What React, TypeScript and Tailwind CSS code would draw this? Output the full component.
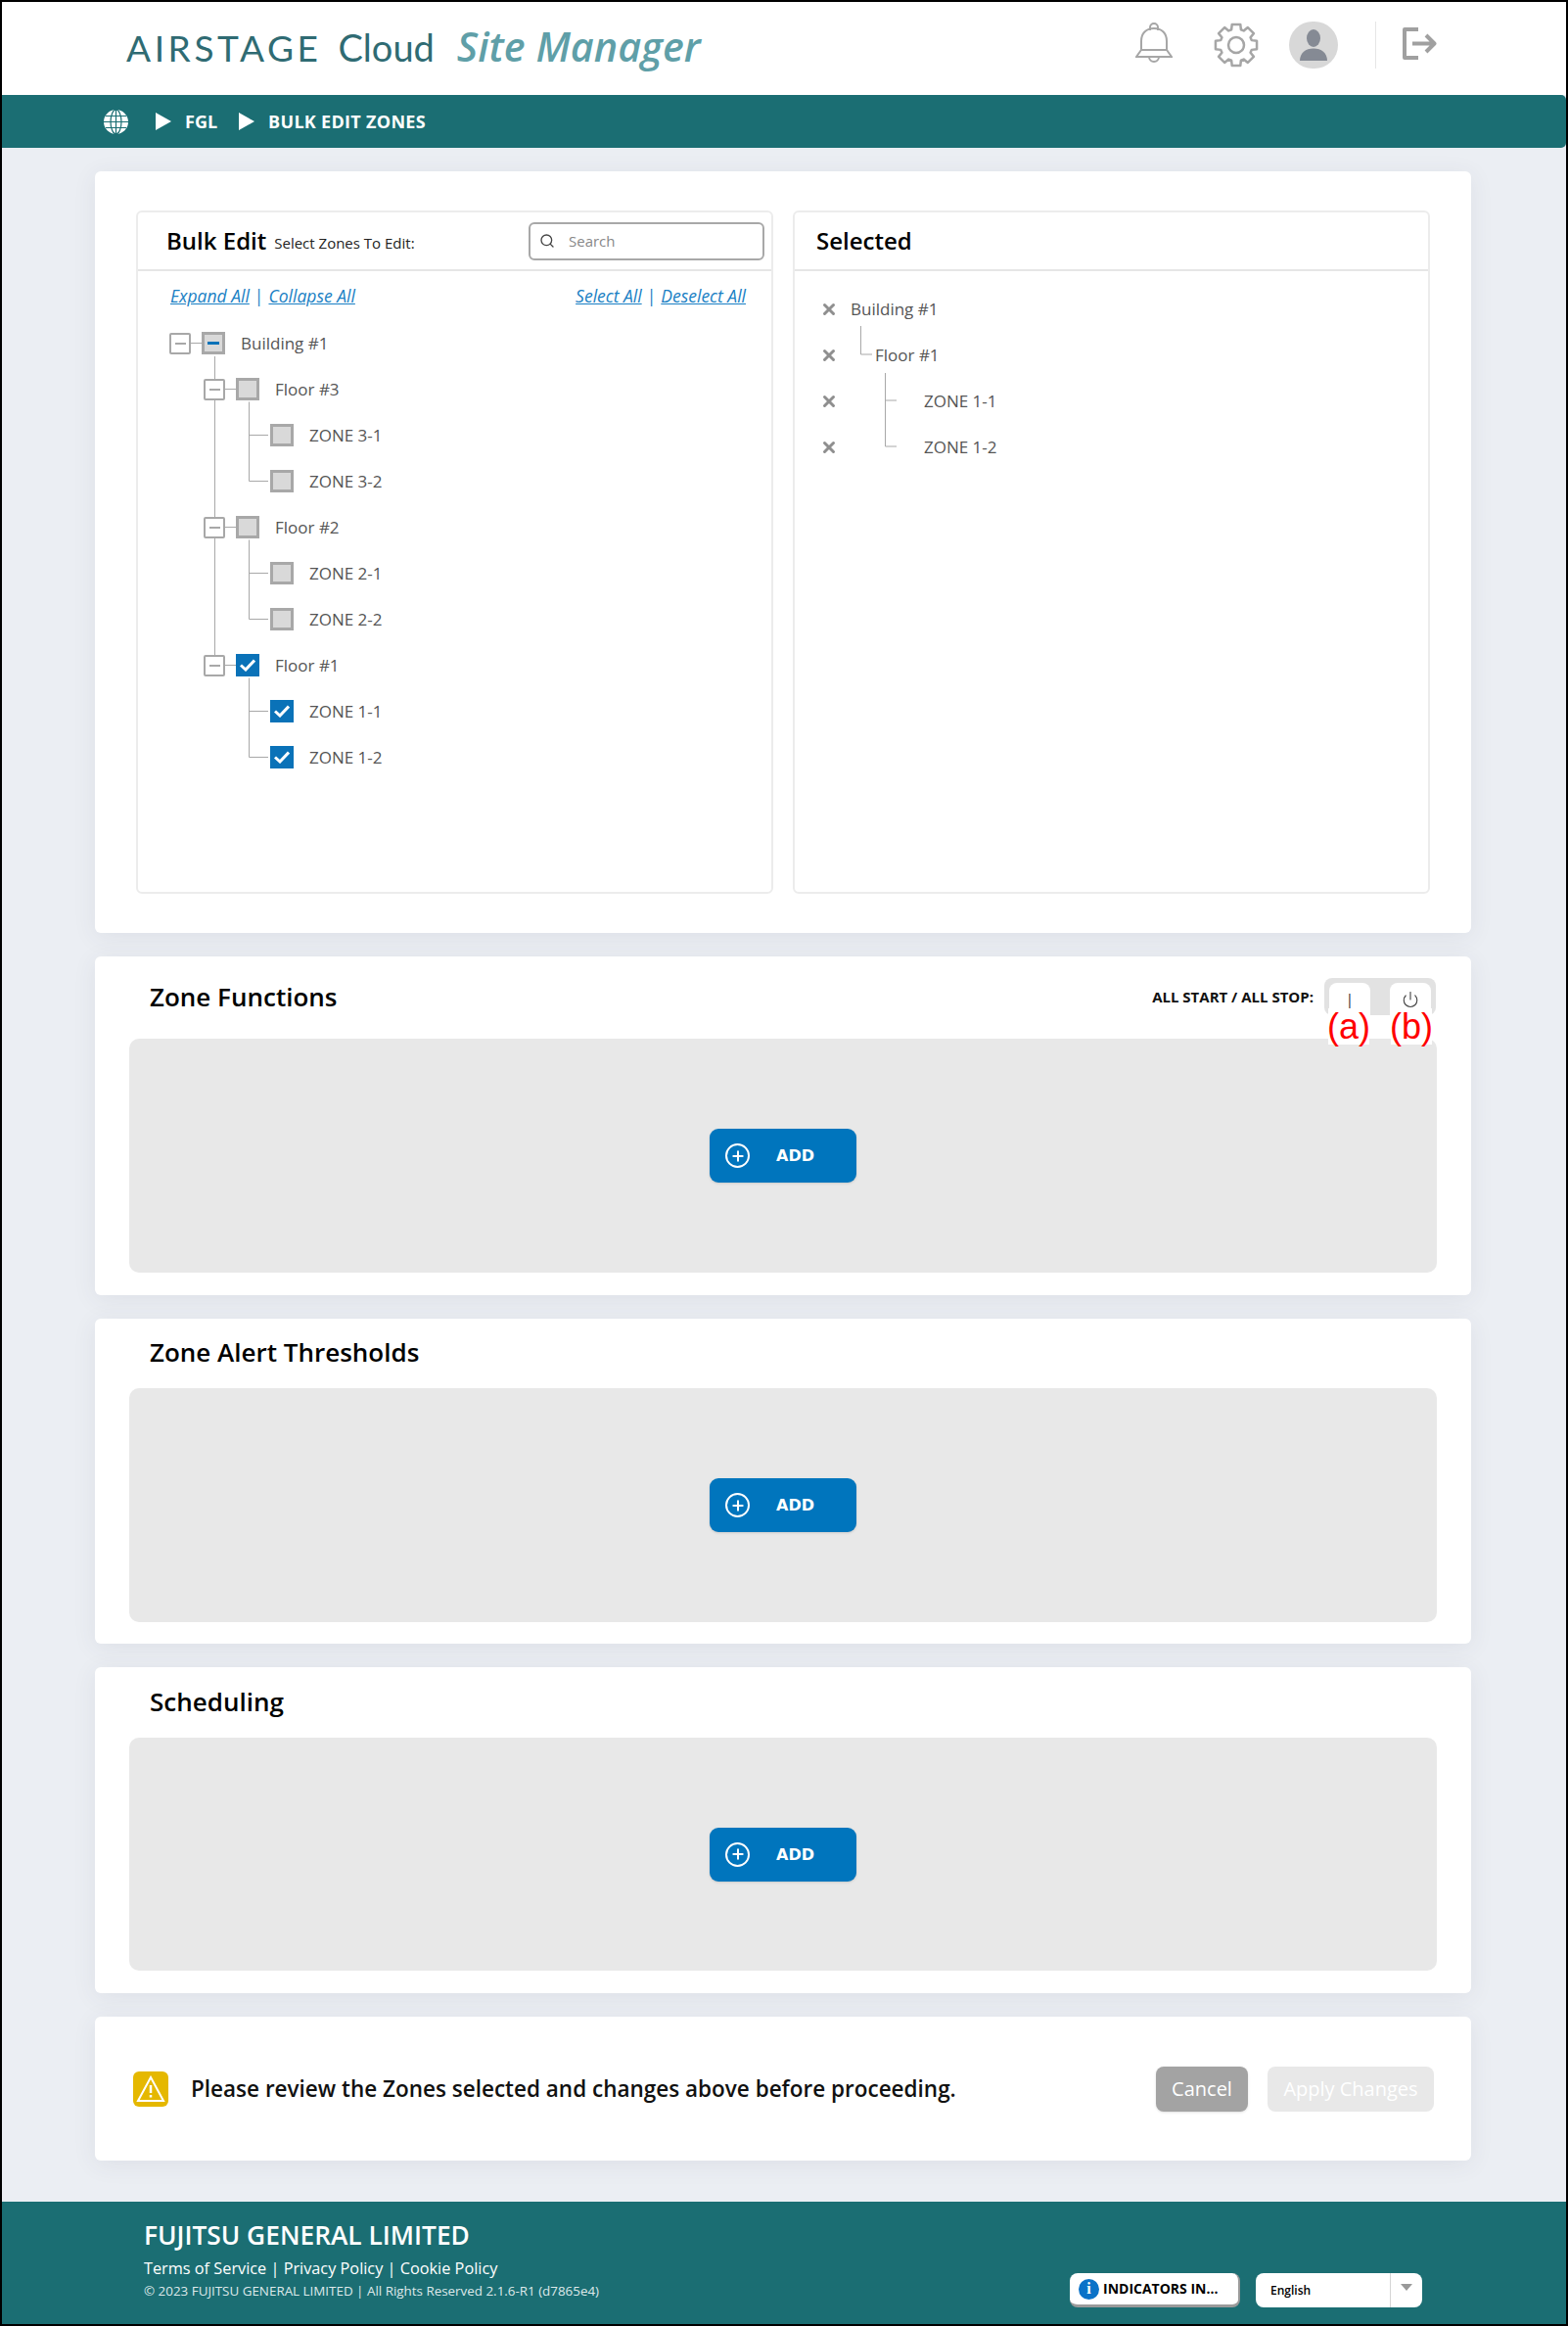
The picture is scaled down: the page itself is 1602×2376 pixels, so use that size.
import { Plus, Power, Search, X } from "lucide-react";

type TreeRow = { label: string; level: number; state: "none" | "some" | "all" };

const treeRows: TreeRow[] = [
  { label: "Building #1", level: 0, state: "some" },
  { label: "Floor #3", level: 1, state: "none" },
  { label: "ZONE 3-1", level: 2, state: "none" },
  { label: "ZONE 3-2", level: 2, state: "none" },
  { label: "Floor #2", level: 1, state: "none" },
  { label: "ZONE 2-1", level: 2, state: "none" },
  { label: "ZONE 2-2", level: 2, state: "none" },
  { label: "Floor #1", level: 1, state: "all" },
  { label: "ZONE 1-1", level: 2, state: "all" },
  { label: "ZONE 1-2", level: 2, state: "all" },
];

// outline of an 8 tooth cog, square teeth like the reference
function cogPath(cx: number, cy: number, outer: number, inner: number) {
  const pts: string[] = [];
  for (let i = 0; i < 8; i++) {
    const a = (i * Math.PI) / 4;
    const offs: [number, number][] = [
      [inner, -0.3],
      [outer, -0.2],
      [outer, 0.2],
      [inner, 0.3],
    ];
    for (const [r, d] of offs) {
      pts.push(`${(cx + r * Math.sin(a + d)).toFixed(2)} ${(cy - r * Math.cos(a + d)).toFixed(2)}`);
    }
  }
  return `M${pts.join("L")}Z`;
}

function Triangle() {
  return (
    <svg width="16" height="18" viewBox="0 0 16 18" className="shrink-0">
      <path d="M0 0L16 9L0 18Z" fill="#fff" />
    </svg>
  );
}

function GlobeIcon() {
  return (
    <svg width="25" height="25" viewBox="0 0 25 25" className="shrink-0">
      <circle cx="12.5" cy="12.5" r="12.5" fill="#fff" />
      <g fill="none" stroke="#1b6e73" strokeWidth="1.2">
        <ellipse cx="12.5" cy="12.5" rx="5.5" ry="12.5" />
        <path d="M12.5 0V25M0 12.5H25M2 6.5H23M2 18.5H23" />
      </g>
    </svg>
  );
}

function BellIcon() {
  return (
    <svg width="38" height="42" viewBox="0 0 38 42" fill="none" stroke="#a6a6a6" strokeWidth="2" className="-mt-[7px]">
      <path d="M15 9V6a4 4 0 0 1 8 0v3" />
      <path d="M6 29V20C6 12 11 7 19 7s13 5 13 13v9" />
      <path d="M6 29H32L37 36H1Z" />
      <path d="M14 36a5 5 0 0 0 10 0" />
    </svg>
  );
}

function CogIcon() {
  return (
    <svg width="46" height="46" viewBox="0 0 46 46" fill="none" stroke="#a6a6a6" strokeWidth="2.500" strokeLinejoin="round">
      <path d={cogPath(23, 23, 21.5, 16.5)} />
      <circle cx="23" cy="23" r="8" />
    </svg>
  );
}

function Avatar() {
  return (
    <div className="flex h-12 w-[50px] items-center justify-center rounded-full bg-[#d8d8d8]">
      <svg width="30" height="32" viewBox="0 0 30 32" fill="#858a94">
        <ellipse cx="15" cy="9" rx="7" ry="9" />
        <path d="M1 32C1 24 7 19.5 15 19.5S29 24 29 32Z" />
      </svg>
    </div>
  );
}

function LogoutIcon() {
  return (
    <svg width="35" height="33" viewBox="0 0 35 33" fill="none" stroke="#a0a0a0" strokeWidth="4" strokeLinejoin="round" className="-mt-[3px]">
      <path d="M16 2H2V31H16" />
      <path d="M10 16.5H32M24 8L32.500 16.500L24 25" />
    </svg>
  );
}

function Expander() {
  return (
    <div className="z-10 flex h-[22px] w-[22px] shrink-0 items-center justify-center rounded-[2px] border-2 border-[#a8a8a8] bg-white">
      <div className="h-[2px] w-[11px] bg-[#a8a8a8]" />
    </div>
  );
}

function Checkbox({ state }: { state: TreeRow["state"] }) {
  if (state === "all") {
    return (
      <div className="z-10 flex h-[23px] w-6 shrink-0 items-center justify-center bg-[#0a72b8]">
        <svg width="16" height="13" viewBox="0 0 16 13" fill="none" stroke="#fff" strokeWidth="3">
          <path d="M1 6.500L6 11L15 1.500" />
        </svg>
      </div>
    );
  }
  return (
    <div className="z-10 flex h-[23px] w-6 shrink-0 items-center justify-center border-[3px] border-[#a8a8a8] bg-[#d9d9d9]">
      {state === "some" && <div className="h-[3px] w-3 bg-[#0a72b8]" />}
    </div>
  );
}

function ZoneTree() {
  const floors = [1, 4, 7].map((i) => 23.5 + 47 * i);
  return (
    <div className="relative mt-3">
      <svg width="200" height="470" className="absolute left-0 top-0" fill="none" stroke="#a8a8a8">
        <path d="M78.500 37V342M54 23.500H65" />
        {floors.map((c) => (
          <path key={c} d={`M89 ${c}H100M113.500 ${c + 13}V${c + 94}H133M113.500 ${c + 47}H133`} />
        ))}
      </svg>
      {treeRows.map((row) => (
        <div
          key={row.label}
          className={
            row.level === 0
              ? "flex h-[47px] items-center pl-[32px] text-[17px] text-[#555]"
              : row.level === 1
                ? "flex h-[47px] items-center pl-[67px] text-[17px] text-[#555]"
                : "flex h-[47px] items-center pl-[135px] text-[17px] text-[#555]"
          }
        >
          {row.level < 2 && <Expander />}
          {row.level < 2 && <div className="w-[11px]" />}
          <Checkbox state={row.state} />
          <span className="relative ml-4">{row.label}</span>
        </div>
      ))}
    </div>
  );
}

function SelectedTree() {
  const rows = [
    { label: "Building #1", indent: "ml-[13px]" },
    { label: "Floor #1", indent: "ml-[38px]" },
    { label: "ZONE 1-1", indent: "ml-[88px]" },
    { label: "ZONE 1-2", indent: "ml-[88px]" },
  ];
  return (
    <div className="relative mt-[15px] pl-[26px]">
      <svg width="120" height="190" className="absolute left-0 top-0" fill="none" stroke="#a8a8a8">
        <path d="M67.500 41V70H79M92.500 89V164H104M92.500 117H104" />
      </svg>
      {rows.map((row) => (
        <div key={row.label} className="flex h-[47px] items-center text-[17px] text-[#555]">
          <X className="h-[18px] w-[18px] shrink-0 text-[#8f8f8f]" strokeWidth={4} />
          <span className={row.indent}>{row.label}</span>
        </div>
      ))}
    </div>
  );
}

function AddBox({ height }: { height: string }) {
  return (
    <div className={`mx-[35px] flex items-center justify-center rounded-[10px] bg-[#e8e8e8] ${height}`}>
      <button className="flex h-[55px] w-[150px] items-center rounded-[9px] bg-[#0075bd] pl-4 font-['DejaVu_Sans',sans-serif] text-base font-bold text-white shadow-sm">
        <span className="flex h-[25px] w-[25px] items-center justify-center rounded-full border-2 border-white">
          <Plus className="h-4 w-4" strokeWidth={3} />
        </span>
        <span className="ml-[27px] mt-px">ADD</span>
      </button>
    </div>
  );
}

function WarningIcon() {
  return (
    <div className="flex h-9 w-9 shrink-0 items-center justify-center rounded-md bg-[#e5b800]">
      <svg width="30" height="28" viewBox="0 0 30 28" fill="none" stroke="#fff" strokeWidth="2">
        <path d="M15 2L28 26H2Z" />
        <path d="M15 10V18M15 20V22.500" strokeWidth="2.500" />
      </svg>
    </div>
  );
}

export default function App() {
  return (
    <div className="box-border flex h-[2376px] w-[1602px] flex-col border-2 border-black bg-[#ebeef3] font-['Open_Sans',sans-serif]">
      <header className="flex h-[95px] shrink-0 items-center bg-white pl-[127px] pr-[132px]">
        <div className="-mt-[3px] flex items-baseline">
          <span className="font-['Lato',sans-serif] text-[37px] tracking-[3.6px] text-[#2f6b73]">AIRSTAGE</span>
          <span className="ml-[17px] font-['Lato',sans-serif] text-[38px] text-[#2f6b73]">Cloud</span>
          <span className="ml-[23px] text-[41.3px] font-semibold italic text-[#5f9fa8]">Site Manager</span>
        </div>
        <div className="mb-[7px] ml-auto flex items-center">
          <BellIcon />
          <div className="ml-[42px]">
            <CogIcon />
          </div>
          <div className="ml-[31px]">
            <Avatar />
          </div>
          <div className="ml-[38px] h-12 w-px bg-[#e6e6e6]" />
          <div className="ml-[27px]">
            <LogoutIcon />
          </div>
        </div>
      </header>

      <nav className="flex h-[54px] shrink-0 items-center rounded-r-[5px] bg-[#1b6e73] pl-[104px] text-lg font-bold text-white">
        <GlobeIcon />
        <div className="ml-[28px]">
          <Triangle />
        </div>
        <span className="ml-[14px]">FGL</span>
        <div className="ml-[22px]">
          <Triangle />
        </div>
        <span className="ml-[14px] tracking-[0.3px]">BULK EDIT ZONES</span>
      </nav>

      <main className="ml-[95px] mt-6 flex w-[1406px] flex-col gap-6">
        <section className="grid h-[778px] grid-cols-2 gap-5 rounded-md bg-white px-[42px] py-10 shadow-[0_4px_24px_rgba(60,70,90,0.08)]">
          <div className="rounded-md border-2 border-[#ececec]">
            <div className="flex h-[60px] items-center border-b-2 border-[#e6e6e6] pl-[29px] pr-[7px]">
              <h2 className="text-2xl font-semibold leading-none text-black">Bulk Edit</h2>
              <span className="ml-2 mt-[4px] text-[15px] text-[#222]">Select Zones To Edit:</span>
              <div className="ml-auto flex h-[39px] w-[241px] items-center gap-[14px] rounded-md border-2 border-[#a8a8a8] pl-[9px] text-[15px] text-[#888]">
                <Search className="h-4 w-4 text-[#444]" strokeWidth={2} />
                Search
              </div>
            </div>
            <div className="flex justify-between pl-[33px] pr-[26px] pt-3 text-[17.5px] italic text-[#1a7fc4]">
              <div className="flex gap-[5px]">
                <span className="underline">Expand All</span>
                <span className="not-italic">|</span>
                <span className="underline">Collapse All</span>
              </div>
              <div className="flex gap-[5px]">
                <span className="underline">Select All</span>
                <span className="not-italic">|</span>
                <span className="underline">Deselect All</span>
              </div>
            </div>
            <ZoneTree />
          </div>
          <div className="rounded-md border-2 border-[#ececec]">
            <div className="flex h-[60px] items-center border-b-2 border-[#e6e6e6] pl-[22px]">
              <h2 className="text-2xl font-semibold leading-none text-black">Selected</h2>
            </div>
            <SelectedTree />
          </div>
        </section>

        <section className="h-[346px] rounded-md bg-white shadow-[0_4px_24px_rgba(60,70,90,0.08)]">
          <div className="flex h-[84px] items-center pl-14 pr-[36px]">
            <h2 className="-mt-[2px] text-[26px] font-semibold text-black">Zone Functions</h2>
            <span className="-mt-[2px] ml-auto text-[15px] font-bold text-[#111]">ALL START / ALL STOP:</span>
            <div className="relative -mt-[2px] ml-[11px] flex h-[38px] w-[114px] justify-between rounded-lg bg-[#e2e2e2] p-[5px] pb-0">
              <div className="flex w-[42px] items-center justify-center rounded-t-lg bg-white text-[#333]">|</div>
              <div className="flex w-[42px] items-center justify-center rounded-t-lg bg-white">
                <Power className="h-[18px] w-[18px] text-[#444]" strokeWidth={1.5} />
              </div>
              <div className="absolute left-[4px] top-[31px] flex h-[37px] w-[42px] items-center justify-center bg-white font-['Liberation_Sans',sans-serif] text-4xl leading-none text-[#ff0000]">
                (a)
              </div>
              <div className="absolute left-[68px] top-[31px] flex h-[37px] w-[42px] items-center justify-center bg-white font-['Liberation_Sans',sans-serif] text-4xl leading-none text-[#ff0000]">
                (b)
              </div>
            </div>
          </div>
          <AddBox height="h-[239px]" />
        </section>

        <section className="h-[332px] rounded-md bg-white shadow-[0_4px_24px_rgba(60,70,90,0.08)]">
          <div className="flex h-[71px] items-center pl-14">
            <h2 className="-mt-[2px] text-[26px] font-semibold text-black">Zone Alert Thresholds</h2>
          </div>
          <AddBox height="h-[239px]" />
        </section>

        <section className="h-[333px] rounded-md bg-white shadow-[0_4px_24px_rgba(60,70,90,0.08)]">
          <div className="flex h-[72px] items-center pl-14">
            <h2 className="-mt-[2px] text-[26px] font-semibold text-black">Scheduling</h2>
          </div>
          <AddBox height="h-[238px]" />
        </section>

        <section className="flex h-[147px] items-center rounded-md bg-white pl-[39px] pr-[38px] shadow-[0_4px_24px_rgba(60,70,90,0.08)]">
          <WarningIcon />
          <p className="ml-[23px] text-[22.5px] font-semibold text-[#111]">
            Please review the Zones selected and changes above before proceeding.
          </p>
          <button className="ml-auto h-[46px] w-[94px] rounded-lg bg-[#a3a3a3] text-xl text-white shadow-sm">Cancel</button>
          <button className="ml-5 h-[46px] w-[170px] rounded-lg bg-[#e8e8e8] text-xl text-white">Apply Changes</button>
        </section>
      </main>

      <footer className="mt-auto flex h-[125px] shrink-0 items-end justify-between bg-[#1b6e73] pb-[17px] pl-[145px] pr-[147px] text-white">
        <div className="mb-[6px]">
          <div className="text-[26.3px] font-semibold leading-[38px]">FUJITSU GENERAL LIMITED</div>
          <div className="mt-[3px] text-[16.3px] leading-[24px]">Terms of Service | Privacy Policy | Cookie Policy</div>
          <div className="text-[13.4px] leading-[22px] text-[#dfe9ea]">© 2023 FUJITSU GENERAL LIMITED | All Rights Reserved 2.1.6-R1 (d7865e4)</div>
        </div>
        <div className="flex items-center gap-4">
          <div className="flex h-[35px] w-[174px] items-center gap-[4px] rounded-lg border-b-[3px] border-r-2 border-[#9a9a9a] bg-white pl-[9px] text-sm font-bold text-black">
            <span className="flex h-[21px] w-[21px] items-center justify-center rounded-full bg-[#0a72c8] font-['Liberation_Serif',serif] text-base font-bold text-white">i</span>
            INDICATORS IN...
          </div>
          <div className="flex h-[35px] w-[170px] items-center rounded-lg bg-white pl-[15px] text-xs font-semibold text-black">
            English
            <div className="ml-auto flex h-full w-[33px] justify-center border-l border-[#d5d5d5] pt-[11px]">
              <svg width="12" height="7" viewBox="0 0 12 7">
                <path d="M0 0H12L6 7Z" fill="#999" />
              </svg>
            </div>
          </div>
        </div>
      </footer>
    </div>
  );
}
